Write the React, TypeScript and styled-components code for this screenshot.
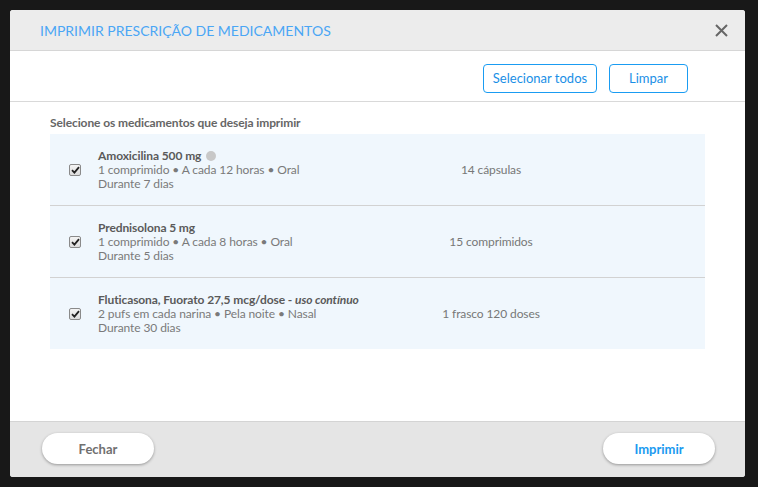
import React from "react";
import styled, { createGlobalStyle } from "styled-components";

const Global = createGlobalStyle`
  html, body { margin: 0; padding: 0; background: #181818; }
  body { font-family: Lato, "Open Sans", Arial, sans-serif; }
  * { box-sizing: border-box; }
`;

const Page = styled.div`
  width: 758px;
  height: 487px;
  padding: 10px 13px 10px 10px;
  background: #181818;
`;

const Dialog = styled.div`
  width: 735px;
  height: 467px;
  display: flex;
  flex-direction: column;
  border-radius: 3px;
  overflow: hidden;
  background: #fff;
`;

const Header = styled.div`
  height: 41px;
  flex: none;
  display: flex;
  align-items: center;
  justify-content: space-between;
  padding: 0 16px 0 30px;
  background: #ececec;
  border-bottom: 1px solid #d6d6d6;
`;

const Title = styled.h1`
  margin: 0;
  font-size: 14px;
  font-weight: 400;
  color: #4aa6f5;
`;

const Close = styled.button`
  border: 0;
  background: transparent;
  padding: 0;
  width: 16px;
  height: 16px;
  display: flex;
  align-items: center;
  justify-content: center;
  cursor: pointer;
`;

const Toolbar = styled.div`
  height: 51px;
  flex: none;
  display: flex;
  align-items: center;
  justify-content: flex-end;
  gap: 12px;
  padding: 4px 57px 0 0;
  border-bottom: 1px solid #d9d9d9;
`;

const OutlineButton = styled.button<{ $w: number }>`
  width: ${(p) => p.$w}px;
  height: 29px;
  border: 1px solid #1a9cf2;
  border-radius: 4px;
  background: #fff;
  color: #1a8fe6;
  font-family: Lato, Arial, sans-serif;
  font-size: 13px;
  padding: 0;
`;

const Body = styled.div`
  flex: 1;
  padding: 14px 40px 0 40px;
`;

const Label = styled.div`
  font-size: 12px;
  font-weight: 700;
  color: #666;
  line-height: 14px;
  margin-bottom: 4px;
  letter-spacing: -0.1px;
`;

const Table = styled.div`
  width: 655px;
  display: flex;
  flex-direction: column;
`;

const Row = styled.div<{ $last?: boolean }>`
  display: grid;
  grid-template-columns: 48px 293px 200px 1fr;
  align-items: center;
  height: ${(p) => (p.$last ? 71 : 72)}px;
  background: #f0f7fd;
  border-bottom: ${(p) => (p.$last ? "none" : "1px solid #d2d2d2")};
`;

const CheckCell = styled.label`
  display: flex;
  justify-content: center;
  padding-left: 2px;
`;

const HiddenInput = styled.input`
  position: absolute;
  opacity: 0;
  width: 0;
  height: 0;
  margin: 0;
`;

const Box = styled.span`
  width: 12px;
  height: 12px;
  border: 1px solid #8a8a8a;
  border-radius: 2px;
  background: linear-gradient(#f4f4f4, #dcdcdc);
  display: flex;
  align-items: center;
  justify-content: center;
`;

const Details = styled.div`
  font-size: 12px;
  line-height: 14px;
  color: #7a7a7a;
  letter-spacing: -0.1px;
`;

const Name = styled.div`
  font-weight: 700;
  color: #5a5a5a;
  display: flex;
  align-items: center;
  gap: 5px;
`;

const Dot = styled.span`
  width: 10px;
  height: 10px;
  border-radius: 50%;
  background: #c8c8c8;
  display: inline-block;
`;

const Cont = styled.em`
  font-weight: 700;
  font-style: italic;
`;

const Qty = styled.div`
  font-size: 12px;
  color: #777;
  text-align: center;
  letter-spacing: -0.1px;
`;

const Footer = styled.div`
  height: 56px;
  flex: none;
  display: flex;
  align-items: center;
  justify-content: space-between;
  padding: 0 30px 2px 32px;
  background: #e5e5e5;
  border-top: 1px solid #d4d4d4;
`;

const PillButton = styled.button<{ $primary?: boolean }>`
  width: 112px;
  height: 31px;
  border: 0;
  border-radius: 16px;
  background: #fff;
  box-shadow: 0 1px 3px rgba(0, 0, 0, 0.35);
  font-family: Lato, Arial, sans-serif;
  font-size: 13px;
  font-weight: 700;
  color: ${(p) => (p.$primary ? "#1a9af0" : "#707070")};
`;

const meds = [
  {
    name: "Amoxicilina 500 mg",
    dot: true,
    line: "1 comprimido • A cada 12 horas • Oral",
    dur: "Durante 7 dias",
    qty: "14 cápsulas",
  },
  {
    name: "Prednisolona 5 mg",
    line: "1 comprimido • A cada 8 horas • Oral",
    dur: "Durante 5 dias",
    qty: "15 comprimidos",
  },
  {
    name: "Fluticasona, Fuorato 27,5 mcg/dose - ",
    cont: "uso contínuo",
    line: "2 pufs em cada narina • Pela noite • Nasal",
    dur: "Durante 30 dias",
    qty: "1 frasco 120 doses",
  },
];

export default function App() {
  return (
    <Page>
      <Global />
      <Dialog>
        <Header>
          <Title>IMPRIMIR PRESCRIÇÃO DE MEDICAMENTOS</Title>
          <Close aria-label="Fechar">
            <svg width="13" height="13" viewBox="0 0 13 13">
              <path d="M1 1L12 12M12 1L1 12" stroke="#666" strokeWidth="2" />
            </svg>
          </Close>
        </Header>
        <Toolbar>
          <OutlineButton $w={114}>Selecionar todos</OutlineButton>
          <OutlineButton $w={79}>Limpar</OutlineButton>
        </Toolbar>
        <Body>
          <Label>Selecione os medicamentos que deseja imprimir</Label>
          <Table>
            {meds.map((m, i) => (
              <Row key={i} $last={i === meds.length - 1}>
                <CheckCell>
                  <HiddenInput type="checkbox" defaultChecked />
                  <Box>
                    <svg width="9" height="8" viewBox="0 0 9 8">
                      <path
                        d="M1 4.2L3.4 6.6L8 1.2"
                        fill="none"
                        stroke="#222"
                        strokeWidth="1.8"
                      />
                    </svg>
                  </Box>
                </CheckCell>
                <Details>
                  <Name>
                    <span>
                      {m.name}
                      {m.cont && <Cont>{m.cont}</Cont>}
                    </span>
                    {m.dot && <Dot />}
                  </Name>
                  <div>{m.line}</div>
                  <div>{m.dur}</div>
                </Details>
                <Qty>{m.qty}</Qty>
                <div />
              </Row>
            ))}
          </Table>
        </Body>
        <Footer>
          <PillButton>Fechar</PillButton>
          <PillButton $primary>Imprimir</PillButton>
        </Footer>
      </Dialog>
    </Page>
  );
}
